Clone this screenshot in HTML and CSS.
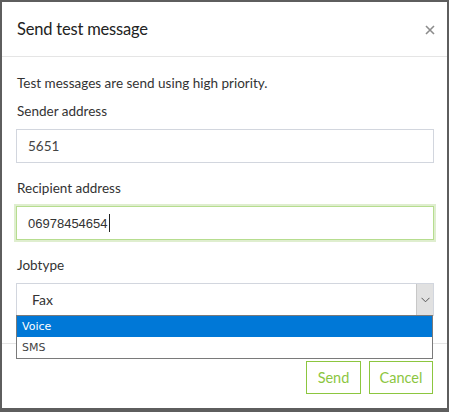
FILE: index.html
```html
<!DOCTYPE html>
<html>
<head>
<meta charset="utf-8">
<link rel="stylesheet" href="styles.css">
</head>
<body>
<div class="backdrop">
  <div class="modal">
    <div class="modal-header">
      <h4 class="modal-title">Send test message</h4>
      <button class="close" aria-label="Close">
        <svg width="10" height="10" viewBox="0 0 10 10"><path d="M1 1L9 9M9 1L1 9" stroke="#8c8c8c" stroke-width="1.6" fill="none"/></svg>
      </button>
    </div>
    <div class="modal-body">
      <p class="intro">Test messages are send using high priority.</p>
      <div class="form-group">
        <label class="label">Sender address</label>
        <div class="input">5651</div>
      </div>
      <div class="form-group">
        <label class="label">Recipient address</label>
        <div class="input focused"><span class="mono">06978454654</span><span class="caret"></span></div>
      </div>
      <div class="form-group last">
        <label class="label">Jobtype</label>
        <div class="select">
          <span class="select-value">Fax</span>
          <span class="select-arrow">
            <svg width="9" height="6" viewBox="0 0 9 6"><path d="M0.5 0.8L4.5 4.8L8.5 0.8" stroke="#555" stroke-width="1" fill="none"/></svg>
          </span>
          <ul class="options">
            <li class="option selected">Voice</li>
            <li class="option">SMS</li>
          </ul>
        </div>
      </div>
    </div>
    <div class="modal-footer">
      <button class="btn btn-send">Send</button>
      <button class="btn btn-cancel">Cancel</button>
    </div>
  </div>
</div>
</body>
</html>
```
FILE: styles.css
```css
html, body {
  margin: 0;
  padding: 0;
}
body {
  background: #5e5e5e;
  font-family: "Lato", "Open Sans", sans-serif;
  color: #333;
}
.backdrop {
  padding: 2px 2px 4px 2px;
}
.modal {
  background: #fff;
  height: 406px;
  box-sizing: border-box;
  display: flex;
  flex-direction: column;
}
.modal-header {
  display: flex;
  align-items: center;
  justify-content: space-between;
  padding: 0 12px 0 15px;
  height: 54px;
  flex: none;
  border-bottom: 1px solid #e5e5e5;
}
.modal-title {
  margin: 0;
  font-weight: normal;
  font-size: 16.5px;
  letter-spacing: -0.2px;
  color: #222;
}
.close {
  border: 0;
  background: none;
  padding: 0;
  width: 10px;
  height: 10px;
  display: flex;
  margin-top: 1px;
}
.modal-body {
  padding: 16px 13px 0 14px;
  position: relative;
  flex: 1;
}
.intro {
  margin: 0 0 8px 1px;
  font-size: 13.5px;
  line-height: 20px;
}
.form-group {
  margin-bottom: 15px;
}
.form-group.last {
  margin-bottom: 0;
}
.label {
  display: block;
  font-size: 13.5px;
  line-height: 20px;
  margin: 0 0 8px 1px;
}
.input {
  height: 34px;
  box-sizing: border-box;
  border: 1px solid #d2d6de;
  padding: 0 11px;
  display: flex;
  align-items: center;
  font-size: 13.5px;
  color: #444;
}
.input.focused {
  border-color: #b6dd8f;
  box-shadow: 0 0 0 2px #dfeecf;
}
.mono {
  font-family: "Liberation Sans", Arial, sans-serif;
  font-size: 13px;
  color: #333;
}
.caret {
  display: inline-block;
  width: 1px;
  height: 18px;
  background: #222;
  margin-left: 1px;
}
.select {
  position: relative;
  height: 33px;
  box-sizing: border-box;
  border: 1px solid #d2d6de;
  display: flex;
  align-items: center;
}
.select-value {
  flex: 1;
  padding-left: 15px;
  font-size: 14px;
  color: #333;
}
.select-arrow {
  align-self: stretch;
  width: 16px;
  background: #e1e1e1;
  border-left: 1px solid #c8c8c8;
  display: flex;
  align-items: center;
  justify-content: center;
}
.options {
  position: absolute;
  left: -1px;
  right: 0px;
  top: 31px;
  margin: 0;
  padding: 0;
  list-style: none;
  background: #fff;
  border: 1px solid #7a7a7a;
  font-family: "DejaVu Sans", Tahoma, sans-serif;
  font-size: 11px;
  z-index: 2;
}
.option {
  height: 21px;
  line-height: 21px;
  padding-left: 5px;
  color: #444;
}
.option.selected {
  background: #0078d7;
  color: #fff;
}
.modal-footer {
  flex: none;
  border-top: 1px solid #e5e5e5;
  padding: 17px 14px 14px;
  display: flex;
  justify-content: flex-end;
  gap: 8px;
}
.btn {
  height: 33px;
  padding: 0;
  background: #fff;
  border: 1px solid #8cc63f;
  color: #8cc63f;
  font-family: "Lato", "Open Sans", sans-serif;
  font-size: 14.5px;
}
.btn-send {
  width: 55px;
}
.btn-cancel {
  width: 64px;
}
```
